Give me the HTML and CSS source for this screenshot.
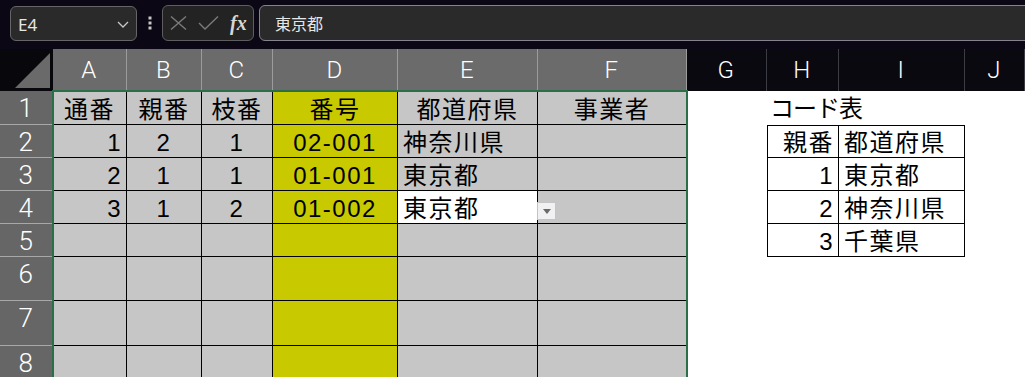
FILE: index.html
```html
<!DOCTYPE html>
<html lang="ja">
<head>
    <meta charset="UTF-8">
    <meta name="viewport" content="width=device-width, initial-scale=1.0">
    <title>Sheet</title>
    <link rel="stylesheet" href="styles.css">
</head>
<body>
    <div class="topbar">
        <div class="namebox">
            <span>E4</span>
            <svg width="12" height="7" viewBox="0 0 12 7"><path d="M1 1l5 5 5-5" fill="none" stroke="#c8c8c8" stroke-width="1.3"/></svg>
        </div>
        <div class="kebab">
            <svg width="4" height="14" viewBox="0 0 4 14"><rect x="0.5" y="0.5" width="3" height="3" fill="#c8c8c8"/><rect x="0.5" y="5.5" width="3" height="3" fill="#c8c8c8"/><rect x="0.5" y="10.5" width="3" height="3" fill="#c8c8c8"/></svg>
        </div>
        <div class="fxbox">
            <svg width="17" height="14" viewBox="0 0 17 14"><path d="M1 0.5l15 13M16 0.5l-15 13" stroke="#7a7a7a" stroke-width="1.4"/></svg>
            <svg width="21" height="14" viewBox="0 0 21 14"><path d="M1 7l6 6L20 0.5" fill="none" stroke="#7a7a7a" stroke-width="1.4"/></svg>
            <span class="fx">fx</span>
        </div>
        <div class="formula">東京都</div>
    </div>

    <div class="sheet">
        <div class="corner"><div class="tri"></div></div>
        <div class="ch">A</div><div class="ch">B</div><div class="ch">C</div><div class="ch">D</div><div class="ch">E</div><div class="ch">F</div>
        <div class="ch dark">G</div><div class="ch dark">H</div><div class="ch dark">I</div><div class="ch dark">J</div>

        <div class="rh">1</div>
        <div class="c mid">通番</div><div class="c mid">親番</div><div class="c mid">枝番</div><div class="c y mid">番号</div><div class="c mid">都道府県</div><div class="c mid">事業者</div>
        <div class="w"></div><div class="w title">コード表</div><div class="w"></div><div class="w"></div>

        <div class="rh">2</div>
        <div class="c right">1</div><div class="c mid">2</div><div class="c mid">1</div><div class="c y mid">02-001</div><div class="c left">神奈川県</div><div class="c"></div>
        <div class="w"></div><div class="w th top right">親番</div><div class="w td top left">都道府県</div><div class="w"></div>

        <div class="rh">3</div>
        <div class="c right">2</div><div class="c mid">1</div><div class="c mid">1</div><div class="c y mid">01-001</div><div class="c left">東京都</div><div class="c"></div>
        <div class="w"></div><div class="w th right">1</div><div class="w td left">東京都</div><div class="w"></div>

        <div class="rh">4</div>
        <div class="c right">3</div><div class="c mid">1</div><div class="c mid">2</div><div class="c y mid">01-002</div>
        <div class="c left active">東京都<span class="drop"><svg width="8" height="5" viewBox="0 0 8 5"><path d="M0 0h8L4 5z" fill="#6a6a6a"/></svg></span></div><div class="c"></div>
        <div class="w"></div><div class="w th right">2</div><div class="w td left">神奈川県</div><div class="w"></div>

        <div class="rh">5</div>
        <div class="c"></div><div class="c"></div><div class="c"></div><div class="c y"></div><div class="c"></div><div class="c"></div>
        <div class="w"></div><div class="w th right">3</div><div class="w td left">千葉県</div><div class="w"></div>

        <div class="rh">6</div>
        <div class="c"></div><div class="c"></div><div class="c"></div><div class="c y"></div><div class="c"></div><div class="c"></div>
        <div class="w"></div><div class="w"></div><div class="w"></div><div class="w"></div>

        <div class="rh">7</div>
        <div class="c"></div><div class="c"></div><div class="c"></div><div class="c y"></div><div class="c"></div><div class="c"></div>
        <div class="w"></div><div class="w"></div><div class="w"></div><div class="w"></div>

        <div class="rh">8</div>
        <div class="c"></div><div class="c"></div><div class="c"></div><div class="c y"></div><div class="c"></div><div class="c"></div>
        <div class="w"></div><div class="w"></div><div class="w"></div><div class="w"></div>

        <div class="sel"></div>
    </div>
</body>
</html>
```

FILE: styles.css
```css
* { margin: 0; padding: 0; box-sizing: border-box; }
body { width: 1025px; height: 377px; overflow: hidden; background: #0b0714; font-family: "Liberation Sans", "Noto Sans CJK JP", sans-serif; }

/* formula bar */
.topbar {
    display: flex;
    align-items: flex-start;
    height: 49px;
    padding: 5px 0 0 10px;
    overflow: hidden;
}
.namebox {
    display: flex;
    align-items: center;
    justify-content: space-between;
    width: 127px;
    height: 35px;
    margin-top: 1px;
    padding: 2px 7px 0 7px;
    background: #2a2a2a;
    border: 1px solid #666;
    border-radius: 6px;
    color: #e6e6e6;
    font: 17px "Noto Sans", sans-serif;
}
.kebab {
    display: flex;
    justify-content: center;
    width: 25px;
    padding-top: 11px;
}
.fxbox {
    display: flex;
    align-items: center;
    width: 92px;
    height: 36px;
    padding-left: 7px;
    gap: 11px;
    background: #232323;
    border: 1px solid #5e5e5e;
    border-radius: 6px;
}
.fx {
    color: #d6d6d6;
    font: italic bold 20px "Liberation Serif", serif;
}
.formula {
    flex: 1;
    height: 36px;
    margin: 0 -10px 0 5px;
    padding: 5px 0 0 15px;
    background: #2a2a2a;
    border: 1px solid #85838f;
    border-radius: 6px;
    color: #e6e6e6;
    font: 16px "Noto Sans CJK JP", sans-serif;
}

/* grid */
.sheet {
    position: relative;
    display: grid;
    grid-template-columns: 53px 74px 75px 71px 125px 140px 149px 80px 72px 126px 1fr;
    grid-template-rows: 42px 34px 33px 33px 33px 33px 44px 45px 40px;
    font-size: 24px;
    letter-spacing: 1.5px;
}
.corner { position: relative; background: #08070c; }
.tri {
    position: absolute;
    right: 3px;
    bottom: 3px;
    width: 35px;
    height: 35px;
    background: #6a6a6a;
    clip-path: polygon(100% 0, 100% 100%, 0 100%);
}
.ch {
    display: flex;
    align-items: center;
    justify-content: center;
    background: #6b6b6b;
    border-right: 1px solid #9c9c9c;
    color: #fff;
    font: 300 24px Roboto, sans-serif;
}
.ch.dark { background: #0a0910; border-right-color: #3c3c44; }
.rh {
    display: flex;
    justify-content: center;
    padding-top: 2px;
    background: #666;
    border-bottom: 1px solid #a8a8a8;
    color: #fff;
    font: 300 26px/30px Roboto, sans-serif;
}
.c, .w {
    display: flex;
    align-items: flex-end;
    line-height: 28px;
    white-space: nowrap;
    color: #000;
}
.c {
    background: #c6c6c6;
    border-right: 1px solid #000;
    border-bottom: 1px solid #000;
}
.c.y { background: #c9c900; }
.w { background: #fff; }
.mid { justify-content: center; }
.right { justify-content: flex-end; padding-right: 4px; }
.left { padding-left: 5px; }
.title {
    position: relative;
    z-index: 1;
    align-items: center;
    padding: 1px 0 0 3px;
    letter-spacing: -1px;
}
.th { border: 1px solid #000; border-top: none; }
.td { border-right: 1px solid #000; border-bottom: 1px solid #000; }
.th.top, .td.top { border-top: 1px solid #000; }
.active { position: relative; background: #fff; }
.drop {
    position: absolute;
    left: 100%;
    top: 11px;
    display: flex;
    align-items: center;
    justify-content: center;
    width: 19px;
    height: 18px;
    background: #f1f1f3;
    border: 1px solid #c4c4c4;
}
.sel {
    position: absolute;
    left: 52px;
    top: 41px;
    width: 636px;
    height: 300px;
    border: 2px solid #2a6f48;
    border-bottom: none;
    pointer-events: none;
}
```
